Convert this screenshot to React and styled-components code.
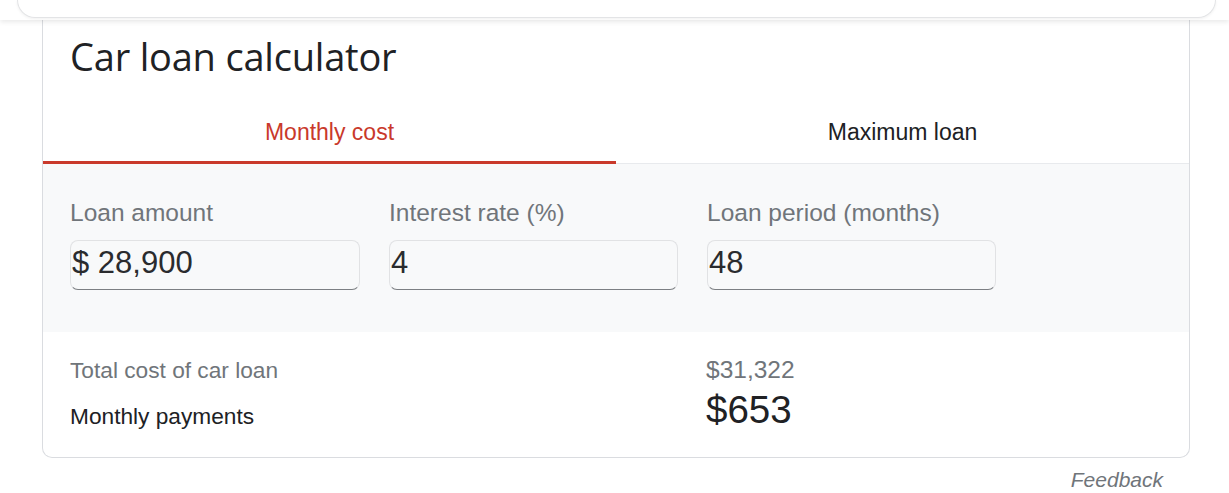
import React from 'react'
import styled, { createGlobalStyle } from 'styled-components'

const colors = {
  red: '#c9392b',
  text: '#202124',
  grey: '#70757a',
  border: '#dadce0',
  divider: '#e8eaed',
  panelBg: '#f8f9fa'
}

const GlobalStyle = createGlobalStyle`
  body {
    margin: 0;
    background: #fff;
    font-family: "Liberation Sans", Arial, sans-serif;
    color: ${colors.text};
  }
`

const Header = styled.div`
  position: relative;
  z-index: 2;
  height: 20px;
  background: #fff;
  box-shadow: 0 2px 5px rgba(0, 0, 0, 0.09);
`

const SearchEdge = styled.div`
  height: 17px;
  margin: 0 13px 0 17px;
  border: 1px solid #e3e4e6;
  border-top: none;
  border-radius: 0 0 18px 18px;
  box-shadow: 0 1px 3px rgba(0, 0, 0, 0.06);
`

const Card = styled.div`
  margin: 0 39px 0 42px;
  border: 1px solid ${colors.border};
  border-top: none;
  border-radius: 0 0 10px 10px;
  overflow: hidden;
`

const Title = styled.h1`
  margin: 0;
  padding: 13px 27px 0;
  height: 80px;
  box-sizing: border-box;
  font-family: "Open Sans", sans-serif;
  font-weight: 400;
  font-size: 38px;
  line-height: 46px;
  color: ${colors.text};
  letter-spacing: -0.2px;
`

const Tabs = styled.div`
  display: grid;
  grid-template-columns: 1fr 1fr;
  height: 63px;
  border-bottom: 1px solid ${colors.divider};
`

const Tab = styled.div`
  display: flex;
  align-items: center;
  justify-content: center;
  font-size: 23px;
  color: ${props => props.active ? colors.red : colors.text};
  border-bottom: 3px solid ${props => props.active ? colors.red : 'transparent'};
  margin-bottom: -1px;
  padding-top: 3px;
`

const Panel = styled.div`
  background: ${colors.panelBg};
  padding: 35px 27px 42px;
  display: grid;
  grid-template-columns: 290px 289px 289px;
  column-gap: 29px;
`

const Field = styled.div`
  display: flex;
  flex-direction: column;
`

const Label = styled.div`
  font-size: 24.5px;
  line-height: 28px;
  color: ${colors.grey};
  margin-bottom: 13px;
`

const Input = styled.div`
  box-sizing: border-box;
  height: 50px;
  border: 1px solid #e1e2e4;
  border-bottom: 1px solid #7c7f83;
  border-radius: 8px;
  display: flex;
  align-items: center;
  padding: 0 0 4px 1px;
  font-size: 31px;
  color: #2a2b2e;
`

const Results = styled.div`
  display: grid;
  grid-template-columns: 636px 1fr;
  padding: 24px 27px 27px;
  row-gap: 6px;
  align-items: center;
`

const ResultLabel = styled.div`
  font-size: 22.7px;
  line-height: 28px;
  color: ${props => props.muted ? colors.grey : colors.text};
  align-self: ${props => props.muted ? 'center' : 'end'};
`

const ResultValue = styled.div`
  font-size: ${props => props.big ? '38.5px' : '24.5px'};
  line-height: ${props => props.big ? '40px' : '28px'};
  color: ${props => props.big ? colors.text : colors.grey};
`

const Feedback = styled.div`
  text-align: right;
  margin: 10px 66px 0 0;
  font-size: 21px;
  font-style: italic;
  color: ${colors.grey};
`

const fields = [
  { label: 'Loan amount', value: '$ 28,900' },
  { label: 'Interest rate (%)', value: '4' },
  { label: 'Loan period (months)', value: '48' }
]

export default function App() {
  return (
    <>
      <GlobalStyle />
      <Header>
        <SearchEdge />
      </Header>
      <Card>
        <Title>Car loan calculator</Title>
        <Tabs>
          <Tab active>Monthly cost</Tab>
          <Tab>Maximum loan</Tab>
        </Tabs>
        <Panel>
          {fields.map(f => (
            <Field key={f.label}>
              <Label>{f.label}</Label>
              <Input>{f.value}</Input>
            </Field>
          ))}
        </Panel>
        <Results>
          <ResultLabel muted>Total cost of car loan</ResultLabel>
          <ResultValue>$31,322</ResultValue>
          <ResultLabel>Monthly payments</ResultLabel>
          <ResultValue big>$653</ResultValue>
        </Results>
      </Card>
      <Feedback>Feedback</Feedback>
    </>
  )
}
